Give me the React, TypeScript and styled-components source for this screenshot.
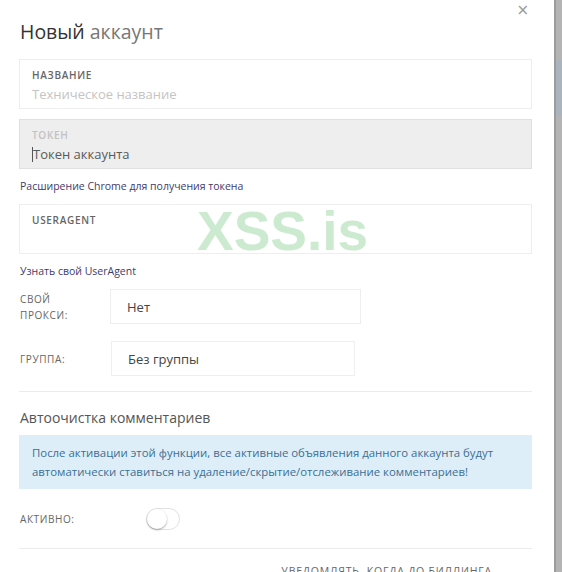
import styled, { createGlobalStyle } from "styled-components";

const GlobalStyle = createGlobalStyle`
  html, body {
    margin: 0;
    padding: 0;
    background: #b4b4b4;
  }
  * { box-sizing: border-box; }
`;

const Page = styled.div`
  display: flex;
  width: 562px;
  height: 572px;
  overflow: hidden;
  background: linear-gradient(to bottom, #b4b4b4 0, #b4b4b4 58px, #a9b4bd 62px, #a9b4bd 112px, #b4b4b4 118px);
`;

const Modal = styled.div`
  position: relative;
  width: 556px;
  flex-shrink: 0;
  background: #fff;
  border-right: 2px solid #9c9c9c;
  padding: 20px 22px 0 19px;
  font-family: "Open Sans", "Noto Sans", sans-serif;
  color: #555;
`;

const Close = styled.span`
  position: absolute;
  top: 1px;
  right: 25px;
  font-size: 15px;
  color: #999;
  font-family: "DejaVu Sans", sans-serif;
`;

const Title = styled.h2`
  margin: 0 0 15px 1px;
  font-size: 19.5px;
  line-height: 24px;
  font-weight: 400;
  color: #777;
  span {
    color: #333;
  }
`;

const Field = styled.div<{ $disabled?: boolean }>`
  height: 50px;
  border: 1px solid ${(p) => (p.$disabled ? "#e0e0e0" : "#eeeeee")};
  background: ${(p) => (p.$disabled ? "#eeeeee" : "#fff")};
  padding: 8px 12px 0;
  margin-bottom: 10px;
`;

const FieldLabel = styled.div<{ $muted?: boolean }>`
  font-size: 10px;
  line-height: 14px;
  font-weight: 600;
  letter-spacing: 0.7px;
  text-transform: uppercase;
  color: ${(p) => (p.$muted ? "#c2c2c2" : "#666")};
`;

const FieldValue = styled.div<{ $placeholder?: boolean }>`
  margin-top: 3px;
  font-size: 13px;
  line-height: 18px;
  color: ${(p) => (p.$placeholder ? "#c4c4c4" : "#5a5a5a")};
`;

const Caret = styled.span`
  display: inline-block;
  width: 1px;
  height: 15px;
  background: #555;
  vertical-align: -3px;
`;

const HelpLink = styled.a`
  display: block;
  margin: 10px 0 11px 1px;
  font-size: 10.5px;
  line-height: 14px;
  color: #433a6b;
  text-decoration: none;
`;

const Row = styled.div<{ $gap?: number }>`
  display: flex;
  align-items: center;
  margin-bottom: ${(p) => p.$gap ?? 0}px;
`;

const RowLabel = styled.div<{ $width: number }>`
  width: ${(p) => p.$width}px;
  flex-shrink: 0;
  padding-left: 1px;
  font-size: 10px;
  line-height: 16px;
  letter-spacing: 0.6px;
  text-transform: uppercase;
  color: #666;
`;

const Select = styled.div<{ $width: number }>`
  width: ${(p) => p.$width}px;
  height: 35px;
  border: 1px solid #eeeeee;
  padding: 0 16px;
  display: flex;
  align-items: center;
  font-size: 13px;
  color: #444;
`;

const Divider = styled.hr`
  margin: 0;
  border: 0;
  border-top: 1px solid #ebebeb;
`;

const SectionTitle = styled.h3`
  margin: 16px 0 7px 1px;
  font-size: 14px;
  line-height: 20px;
  font-weight: 400;
  color: #555;
`;

const Info = styled.div`
  background: #ddeef9;
  padding: 8px 13px;
  font-size: 11.4px;
  line-height: 19px;
  color: #3c6f92;
  margin-bottom: 19px;
`;

const Toggle = styled.div`
  position: relative;
  width: 34px;
  height: 22px;
  border-radius: 11px;
  border: 1px solid #e2e2e2;
  background: #fff;
  &::after {
    content: "";
    position: absolute;
    left: 0;
    top: 0;
    width: 20px;
    height: 20px;
    border-radius: 50%;
    background: #fff;
    box-shadow: 0 1px 2px rgba(0, 0, 0, 0.35);
  }
`;

const Footer = styled.div`
  display: flex;
  justify-content: flex-end;
  padding: 15px 40px 0 0;
  font-size: 10.5px;
  letter-spacing: 0.8px;
  color: #666;
  text-transform: uppercase;
`;

const Watermark = styled.div`
  position: absolute;
  left: 197px;
  top: 199px;
  font-family: "Liberation Sans", Arial, sans-serif;
  font-weight: 700;
  font-size: 55px;
  line-height: 64px;
  color: rgba(120, 200, 130, 0.38);
  pointer-events: none;
`;

export default function App() {
  return (
    <>
      <GlobalStyle />
      <Page>
        <Modal>
          <Close>×</Close>
          <Title>
            <span>Новый</span> аккаунт
          </Title>

          <Field>
            <FieldLabel>Название</FieldLabel>
            <FieldValue $placeholder>Техническое название</FieldValue>
          </Field>

          <Field $disabled>
            <FieldLabel $muted>Токен</FieldLabel>
            <FieldValue>
              <Caret />
              Токен аккаунта
            </FieldValue>
          </Field>
          <HelpLink>Расширение Chrome для получения токена</HelpLink>

          <Field style={{ marginBottom: 0 }}>
            <FieldLabel>Useragent</FieldLabel>
          </Field>
          <HelpLink>Узнать свой UserAgent</HelpLink>

          <Row $gap={17}>
            <RowLabel $width={91}>
              Свой
              <br />
              прокси:
            </RowLabel>
            <Select $width={251}>Нет</Select>
          </Row>
          <Row $gap={15}>
            <RowLabel $width={92}>Группа:</RowLabel>
            <Select $width={244}>Без группы</Select>
          </Row>

          <Divider />
          <SectionTitle>Автоочистка комментариев</SectionTitle>
          <Info>
            После активации этой функции, все активные объявления данного аккаунта будут
            автоматически ставиться на удаление/скрытие/отслеживание комментариев!
          </Info>

          <Row $gap={18}>
            <RowLabel $width={127}>Активно:</RowLabel>
            <Toggle />
          </Row>
          <Divider />
          <Footer>Уведомлять, когда до биллинга</Footer>

          <Watermark>XSS.is</Watermark>
        </Modal>
      </Page>
    </>
  );
}
